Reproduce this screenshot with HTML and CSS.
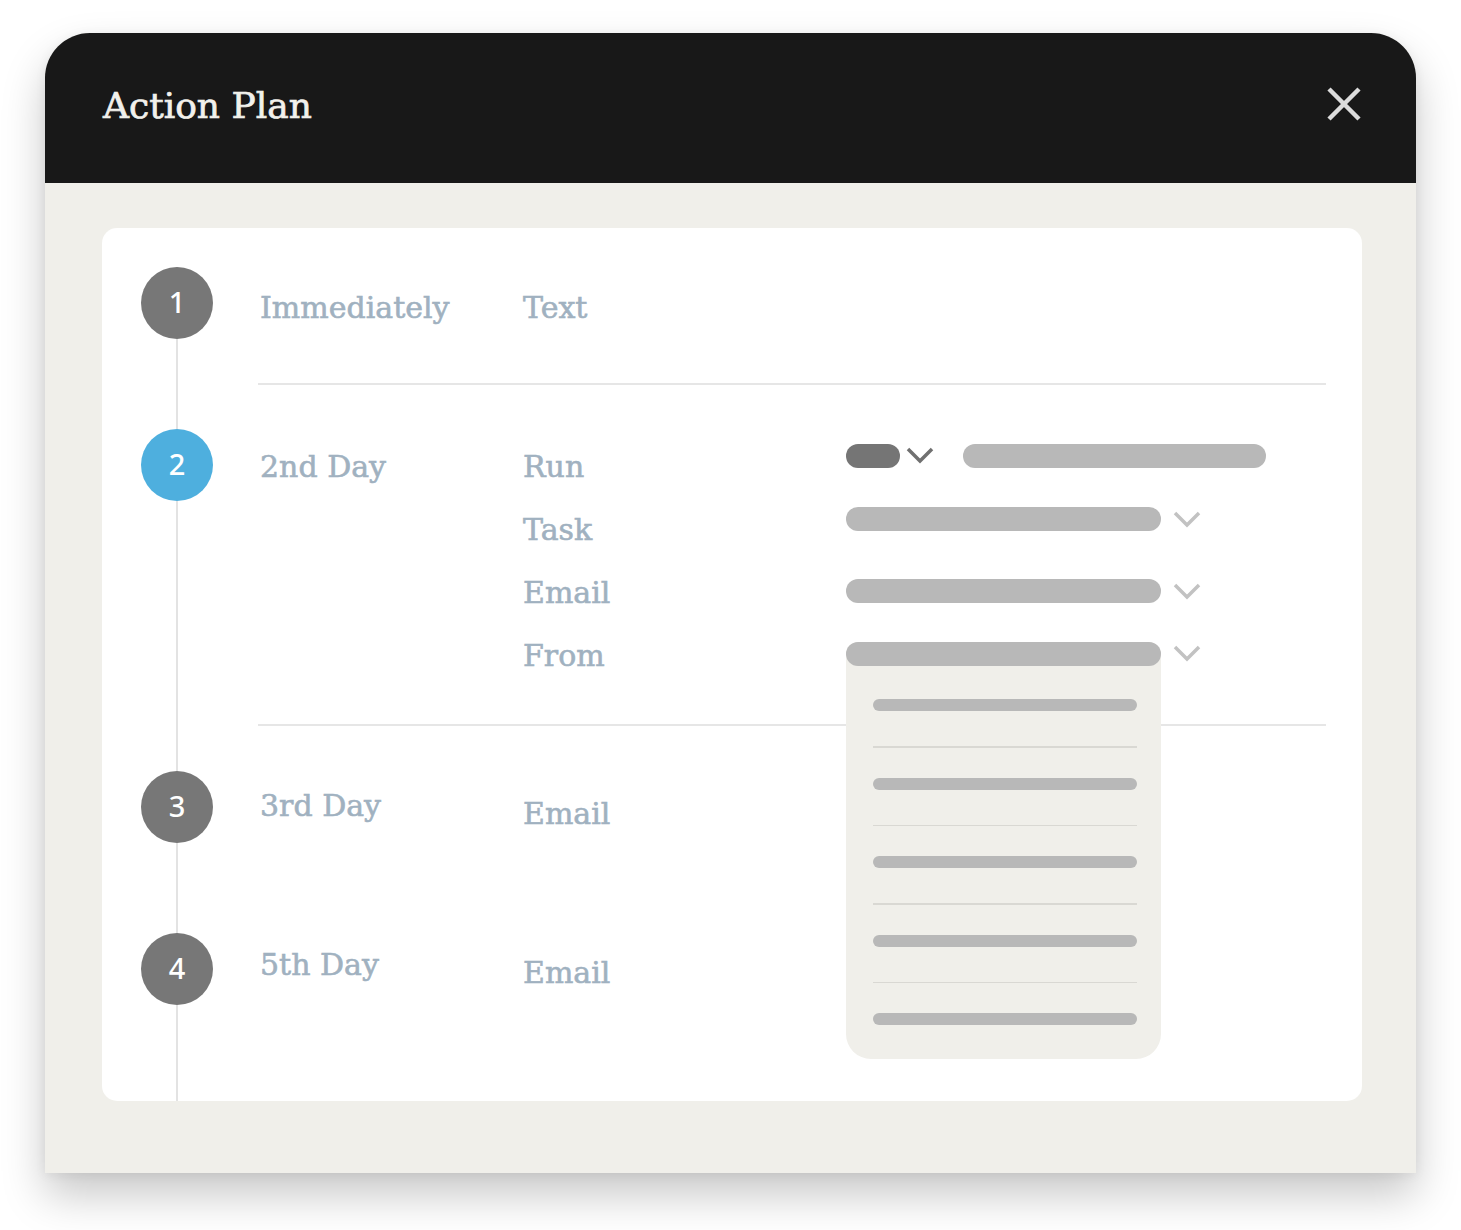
FILE: index.html
```html
<!DOCTYPE html>
<html lang="en">
<head>
<meta charset="utf-8">
<title>Action Plan</title>
<link rel="stylesheet" href="styles.css">
</head>
<body>
<div class="window">
  <div class="header">
    <h1 class="title">Action Plan</h1>
    <svg class="close" viewBox="0 0 36 36" width="36" height="36" aria-label="Close">
      <path d="M3 3 L33 33 M33 3 L3 33" stroke="#dcdcdc" stroke-width="4.5" stroke-linecap="butt" fill="none"/>
    </svg>
  </div>
  <div class="body">
    <div class="card">
      <div class="step s1">
        <div class="num gray">1</div>
        <div class="content">
          <div class="when">Immediately</div>
          <div class="acts"><div class="act">Text</div></div>
        </div>
      </div>

      <div class="step s2">
        <div class="num blue">2</div>
        <div class="content">
          <div class="when">2nd Day</div>
          <div class="acts">
            <div class="act">Run</div>
            <div class="act">Task</div>
            <div class="act">Email</div>
            <div class="act">From</div>
          </div>
          <div class="ctrls">
            <div class="ctrl run">
              <span class="pill dark"></span>
              <svg class="chev" viewBox="0 0 28 18" width="28" height="18"><polyline points="2,2 14,14 26,2" fill="none" stroke="#707070" stroke-width="3.5"/></svg>
              <span class="bar long"></span>
            </div>
            <div class="ctrl task">
              <span class="bar"></span>
              <svg class="chev" viewBox="0 0 28 18" width="28" height="18"><polyline points="2,2 14,14 26,2" fill="none" stroke="#c2c2c2" stroke-width="3.5"/></svg>
            </div>
            <div class="ctrl email">
              <span class="bar"></span>
              <svg class="chev" viewBox="0 0 28 18" width="28" height="18"><polyline points="2,2 14,14 26,2" fill="none" stroke="#c2c2c2" stroke-width="3.5"/></svg>
            </div>
            <div class="ctrl from">
              <div class="select">
                <span class="bar top"></span>
                <div class="menu">
                  <span class="item"></span>
                  <span class="sep"></span>
                  <span class="item"></span>
                  <span class="sep"></span>
                  <span class="item"></span>
                  <span class="sep"></span>
                  <span class="item"></span>
                  <span class="sep"></span>
                  <span class="item"></span>
                </div>
              </div>
              <svg class="chev" viewBox="0 0 28 18" width="28" height="18"><polyline points="2,2 14,14 26,2" fill="none" stroke="#c2c2c2" stroke-width="3.5"/></svg>
            </div>
          </div>
        </div>
      </div>

      <div class="step s3">
        <div class="num gray">3</div>
        <div class="content">
          <div class="when">3rd Day</div>
          <div class="acts"><div class="act">Email</div></div>
        </div>
      </div>

      <div class="step s4">
        <div class="num gray">4</div>
        <div class="content">
          <div class="when">5th Day</div>
          <div class="acts"><div class="act">Email</div></div>
        </div>
      </div>
    </div>
  </div>
</div>
</body>
</html>
```
FILE: styles.css
```css
* { box-sizing: border-box; }

html, body {
  margin: 0;
  padding: 0;
  background: #ffffff;
}

body {
  font-family: "DejaVu Serif", "Liberation Serif", serif;
  min-height: 1230px;
}

.window {
  margin: 33px 0 0 45px;
  width: 1371px;
  height: 1140px;
  border-radius: 45px 45px 0 0;
  background: #f0efea;
  box-shadow: 0 22px 44px rgba(0, 0, 0, 0.22), 0 2px 12px rgba(0, 0, 0, 0.06);
  display: flex;
  flex-direction: column;
}

.header {
  height: 150px;
  flex: none;
  background: #181818;
  border-radius: 45px 45px 0 0;
  display: flex;
  justify-content: space-between;
  align-items: flex-start;
  padding: 51px 54px 0 58px;
}

.title {
  margin: 0;
  font-family: "DejaVu Serif", serif;
  font-weight: normal;
  font-size: 36px;
  line-height: 44px;
  color: #f2f1ec;
  -webkit-text-stroke: 0.7px #f2f1ec;
}

.close {
  display: block;
  margin-top: 2px;
}

.body {
  padding: 45px 54px 0 57px;
}

.card {
  height: 873px;
  background-color: #ffffff;
  background-image: linear-gradient(#e3e3e3, #e3e3e3);
  background-repeat: no-repeat;
  background-position: 74px 75px;
  background-size: 2px 100%;
  border-radius: 15px;
  padding: 39px 36px 0 39px;
}

.step {
  display: flex;
  align-items: flex-start;
}

.num {
  width: 72px;
  height: 72px;
  flex: none;
  border-radius: 50%;
  display: flex;
  align-items: center;
  justify-content: center;
  color: #ffffff;
  font-family: "Noto Sans", "Open Sans", sans-serif;
  font-weight: 500;
  font-size: 29px;
  line-height: 1;
  padding-bottom: 3px;
}

.num.gray { background: #777777; }
.num.blue { background: #4eafde; }

.content {
  flex: 1;
  margin-left: 45px;
  display: grid;
  grid-template-columns: 263px 325px 1fr;
  align-items: start;
}

.when, .act {
  font-size: 30px;
  color: #a0b1c0;
  -webkit-text-stroke: 0.6px #a0b1c0;
  white-space: nowrap;
  padding-left: 2px;
}

/* step 1 */
.s1 .content {
  height: 118px;
  border-bottom: 2px solid #e6e6e6;
}
.s1 .when, .s1 .act {
  line-height: 36px;
  padding-top: 23px;
}

/* step 2 */
.s2 .num { margin-top: 44px; }
.s2 .content {
  height: 341px;
  border-bottom: 2px solid #e6e6e6;
  padding-top: 50px;
}
.s2 .when, .s2 .act { line-height: 63px; }

.ctrls {
  padding-top: 9px;
  display: flex;
  flex-direction: column;
}

.ctrl {
  display: flex;
  align-items: center;
  height: 24px;
}

.ctrl.task { margin-top: 39px; }
.ctrl.email { margin-top: 48px; }
.ctrl.from { margin-top: 39px; align-items: flex-start; }

.pill, .bar {
  display: block;
  height: 24px;
  border-radius: 12px;
  background: #b8b8b8;
}

.pill.dark {
  width: 54px;
  background: #757575;
}

.run .chev { margin-left: 6px; margin-top: -1px; }
.bar.long { width: 303px; margin-left: 29px; }

.bar { width: 315px; }
.task .chev, .email .chev, .from .chev { margin-left: 12px; margin-top: 2px; }
.from .chev { margin-top: 3px; }

.chev { display: block; flex: none; }

.select {
  position: relative;
  width: 315px;
  height: 24px;
}

.bar.top {
  position: relative;
  z-index: 2;
}

.menu {
  position: absolute;
  z-index: 1;
  left: 0;
  top: 0;
  width: 315px;
  height: 417px;
  background: #f0efea;
  border-radius: 12px 12px 25px 25px;
  padding: 57px 24px 0 27px;
  display: flex;
  flex-direction: column;
}

.item {
  display: block;
  height: 12px;
  border-radius: 6px;
  background: #b8b8b8;
}

.sep {
  display: block;
  height: 1.5px;
  background: #d9d8d3;
  margin: 35px 0 30px;
}

/* step 3 & 4 */
.s3 .num { margin-top: 45px; }
.s4 .num { margin-top: 90px; }
.s3 .when, .s3 .act, .s4 .when, .s4 .act { line-height: 36px; }
.s3 .when { padding-top: 62px; }
.s3 .act { padding-top: 70px; }
.s4 .when { padding-top: 104px; }
.s4 .act { padding-top: 112px; }
```
